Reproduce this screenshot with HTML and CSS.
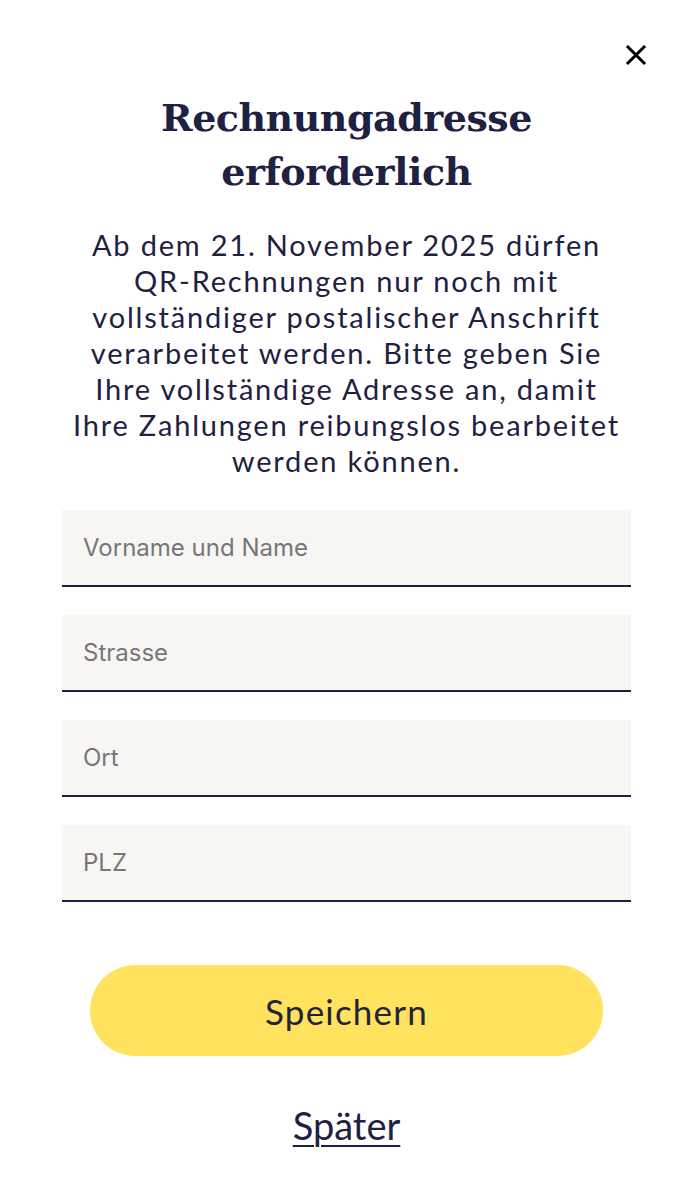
FILE: index.html
```html
<!DOCTYPE html>
<html lang="de">
<head>
<meta charset="utf-8">
<link rel="stylesheet" href="styles.css">
</head>
<body>
<div class="page">
  <div class="topbar">
    <button class="close" aria-label="Schliessen">
      <svg width="22" height="22" viewBox="0 0 22 22"><path d="M3 3 L19 19 M19 3 L3 19" stroke="#000" stroke-width="3" stroke-linecap="square"/></svg>
    </button>
  </div>
  <h1 class="title">Rechnungadresse erforderlich</h1>
  <p class="lead">Ab dem 21. November 2025 dürfen QR&#8209;Rechnungen nur noch mit vollständiger postalischer Anschrift verarbeitet werden. Bitte geben Sie Ihre vollständige Adresse an, damit Ihre Zahlungen reibungslos bearbeitet werden können.</p>
  <form class="form">
    <input class="field" type="text" placeholder="Vorname und Name">
    <input class="field" type="text" placeholder="Strasse">
    <input class="field" type="text" placeholder="Ort">
    <input class="field" type="text" placeholder="PLZ">
    <button type="button" class="save">Speichern</button>
    <a class="later" href="#">Später</a>
  </form>
</div>
</body>
</html>
```
FILE: styles.css
```css
* { box-sizing: border-box; }
html, body { margin: 0; padding: 0; background: #fff; }
body { font-family: Lato, "Noto Sans", sans-serif; color: #1f2142; }
.page { padding: 0 62px; display: flex; flex-direction: column; align-items: stretch; }
.topbar { display: flex; justify-content: flex-end; height: 91px; padding-top: 44px; margin-right: -16px; }
.close { background: none; border: 0; padding: 0; width: 22px; height: 22px; cursor: pointer; }
.title { font-family: "DejaVu Serif", serif; font-weight: bold; font-size: 38px; line-height: 54px; text-align: center; margin: 0 0 28px; color: #1f2142; letter-spacing: -0.5px; }
.lead { font-size: 29px; line-height: 36px; letter-spacing: 1.8px; text-align: center; margin: 0 7px 31px; }
.form { display: flex; flex-direction: column; gap: 28px; }
.field { display: block; width: 100%; height: 77px; border: 0; border-bottom: 2px solid #1f2142; background: #f7f6f3; padding: 0 21px; font-family: Inter, Roboto, sans-serif; font-size: 24px; color: #1f2142; outline: none; border-radius: 0; }
.field::placeholder { color: #76767a; }
.save { margin: 35px 28px 0; height: 91px; border: 0; border-radius: 46px; background: #ffe35e; font-family: Lato, sans-serif; font-size: 35px; letter-spacing: 1.2px; color: #22223a; cursor: pointer; }
.later { align-self: center; margin-top: 18px; font-size: 38px; color: #1f2142; text-decoration: underline; text-underline-offset: 5px; text-decoration-thickness: 2px; }
```
